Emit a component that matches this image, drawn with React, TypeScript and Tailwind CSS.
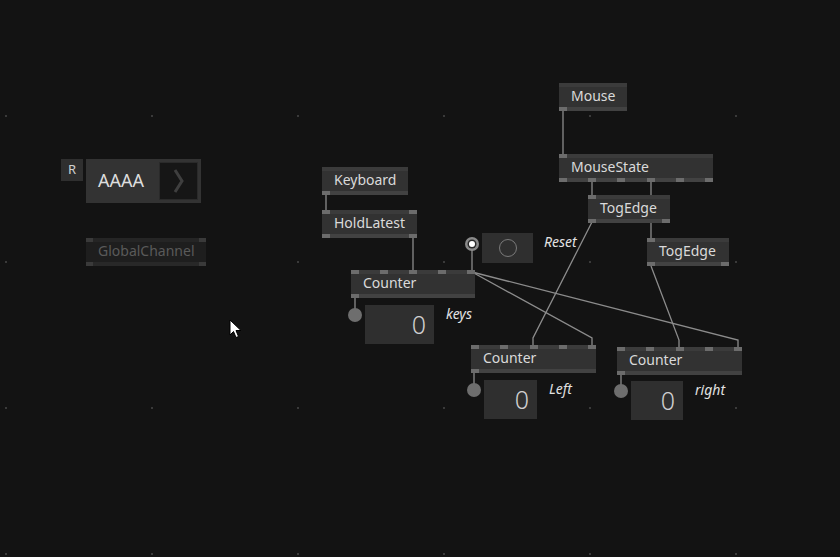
import React from "react";

type NodeProps = {
  x: number;
  y: number;
  w: number;
  label: string;
  ins: number;
  outs: number;
};

// one pin sits at the left edge, two or more spread over the width
function PinRow({ count, className }: { count: number; className: string }) {
  return (
    <div className={`flex h-[4px] justify-between ${className}`}>
      {Array.from({ length: count }).map((_, i) => (
        <span key={i} className="h-[4px] w-[8px] bg-[#6c6c6c]" />
      ))}
    </div>
  );
}

function PatchNode({ x, y, w, label, ins, outs }: NodeProps) {
  return (
    <div className="absolute flex flex-col" style={{ left: x, top: y, width: w }}>
      <PinRow count={ins} className="bg-[#3b3b3b]" />
      <div className="h-[20px] bg-[#323232] pl-[12px] text-[14px] leading-[17px] text-[#dadada]">{label}</div>
      <PinRow count={outs} className="bg-[#424242]" />
    </div>
  );
}

function Output({ x, y, w, label }: { x: number; y: number; w: number; label: string }) {
  return (
    <div className="absolute flex items-start" style={{ left: x, top: y }}>
      <span className="mt-[3px] h-[14px] w-[14px] rounded-full bg-[#6e6e6e]" />
      <div
        className="ml-[3px] flex h-[39px] items-center justify-end bg-[#2f2f2f] pr-[8px] text-[25px] font-light leading-none text-[#cfcfcf]"
        style={{ width: w }}
      >
        0
      </div>
      <span className="ml-[12px] text-[14px] italic leading-[18px] text-[#e2e2e2]">{label}</span>
    </div>
  );
}

const cols = [6, 152, 298, 444, 590, 736];
const rows = [116, 262, 408, 554];

export default function App() {
  return (
    <div className="relative h-[557px] w-[840px] overflow-hidden bg-[#131313] font-['Noto_Sans',sans-serif]">
      <svg className="absolute left-0 top-0" width={840} height={557}>
        {rows.map((ry) =>
          cols.map((cx) => <rect key={`${cx}-${ry}`} x={cx - 1} y={ry - 1} width={2} height={2} fill="#3a3a3a" />)
        )}
        <g stroke="#8c8c8c" strokeWidth={1.3} fill="none">
          <polyline points="326,195 326,210" />
          <polyline points="413,238 413,270" />
          <polyline points="472,244 472,270" />
          <polyline points="355,298 355,315" />
          <polyline points="472,272 592,338 592,345" />
          <polyline points="472,272 738,340 738,347" />
          <polyline points="592,222 533,338 533,345" />
          <polyline points="651,266 679,340 679,347" />
          <polyline points="563,111 563,154" />
          <polyline points="592,182 592,195" />
          <polyline points="651,182 651,238" />
          <polyline points="474,373 474,390" />
          <polyline points="621,375 621,391" />
        </g>
      </svg>

      {/* left side: R toggle, string box, channel */}
      <div className="absolute left-[61px] top-[159px] flex items-start gap-[3px]">
        <div className="flex h-[22px] w-[22px] items-center justify-center bg-[#2f2f2f] text-[13px] text-[#d0d0d0]">R</div>
        <div className="flex h-[44px] w-[115px] items-center bg-[#333333] pr-[3px]">
          <span className="flex-1 pb-[2px] pl-[12px] text-[18px] text-[#dedede]">AAAA</span>
          <div className="flex h-[38px] w-[39px] items-center justify-center border border-[#2a2a2a] bg-[#161616]">
            <svg width="12" height="24" viewBox="0 0 12 24">
              <polyline points="2,1 9,12 2,23" stroke="#3f3f3f" strokeWidth="3" fill="none" />
            </svg>
          </div>
        </div>
      </div>
      <div className="absolute left-[86px] top-[238px] flex w-[120px] flex-col">
        <div className="flex h-[4px] justify-between bg-[#252525]">
          <span className="w-[7px] bg-[#3a3a3a]" />
          <span className="w-[7px] bg-[#3a3a3a]" />
        </div>
        <div className="h-[20px] bg-[#1e1e1e] pl-[12px] text-[14px] leading-[17px] text-[#5a5a5a]">GlobalChannel</div>
        <div className="flex h-[4px] justify-between bg-[#282828]">
          <span className="w-[7px] bg-[#3a3a3a]" />
          <span className="w-[7px] bg-[#3a3a3a]" />
        </div>
      </div>

      <PatchNode x={322} y={167} w={86} label="Keyboard" ins={0} outs={1} />
      <PatchNode x={322} y={210} w={95} label="HoldLatest" ins={2} outs={2} />
      <PatchNode x={351} y={270} w={124} label="Counter" ins={5} outs={1} />
      <PatchNode x={559} y={83} w={68} label="Mouse" ins={0} outs={1} />
      <PatchNode x={559} y={154} w={154} label="MouseState" ins={1} outs={6} />
      <PatchNode x={588} y={195} w={82} label="TogEdge" ins={1} outs={2} />
      <PatchNode x={647} y={238} w={82} label="TogEdge" ins={1} outs={2} />
      <PatchNode x={471} y={345} w={125} label="Counter" ins={5} outs={1} />
      <PatchNode x={617} y={347} w={125} label="Counter" ins={5} outs={1} />

      {/* bang / reset */}
      <div className="absolute left-[464px] top-[233px] flex items-start">
        <svg className="mt-[3px]" width={16} height={16}>
          <circle cx={8} cy={8} r={7} fill="#8a8a8a" />
          <circle cx={8} cy={8} r={4.5} fill="#2a2a2a" />
          <circle cx={8} cy={8} r={3} fill="#ffffff" />
        </svg>
        <div className="ml-[2px] flex h-[30px] w-[51px] items-center justify-center bg-[#2f2f2f]">
          <div className="h-[18px] w-[18px] rounded-full border-[1.5px] border-[#7a7a7a]" />
        </div>
        <span className="ml-[11px] text-[14px] italic leading-[18px] text-[#e2e2e2]">Reset</span>
      </div>

      <Output x={348} y={305} w={69} label="keys" />
      <Output x={467} y={380} w={53} label="Left" />
      <Output x={614} y={381} w={52} label="right" />

      {/* cursor */}
      <svg className="absolute left-[229px] top-[319px]" width={14} height={20} viewBox="0 0 14 20">
        <path d="M1 1 L1 16 L4.5 12.5 L7 18.5 L9.5 17.5 L7 11.5 L12 11.5 Z" fill="#ffffff" stroke="#000000" strokeWidth="1" />
      </svg>
    </div>
  );
}
